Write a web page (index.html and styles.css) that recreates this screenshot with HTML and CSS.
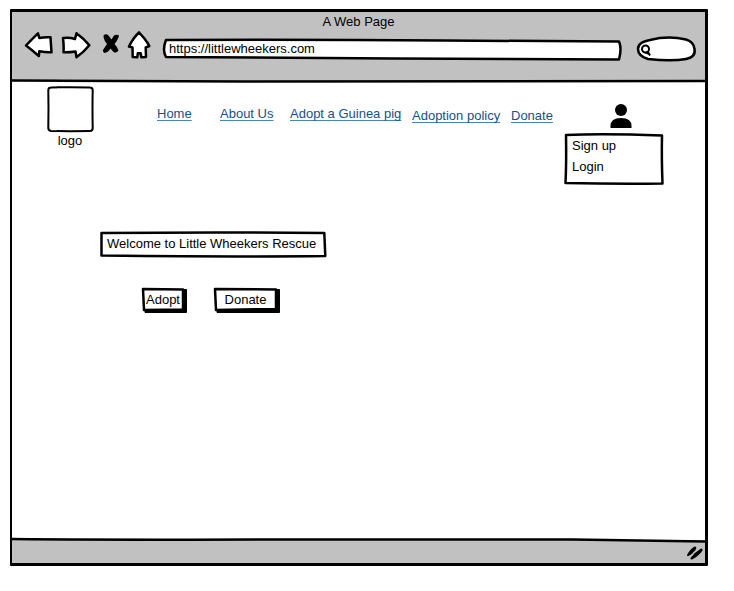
FILE: index.html
```html
<!DOCTYPE html>
<html lang="en">
<head>
<meta charset="utf-8">
<title>A Web Page</title>
<link rel="stylesheet" href="styles.css">
</head>
<body>
<div class="window">
  <header class="chrome">
    <div class="title">A Web Page</div>
    <div class="toolbar">
      <button class="tool" type="button" aria-label="Back"><svg width="30" height="28" viewBox="24 31 30 28"><path class="shape" d="M26 45.500Q32 39 38 33.300L39.300 38Q45 36.800 50.500 37.300L51.500 52.300Q46 52.600 39.300 51.300L38.800 56Q32 50 26 45.500Z"/></svg></button>
      <button class="tool" type="button" aria-label="Forward"><svg width="32" height="28" viewBox="60 31 32 28"><path class="shape" d="M63 38Q69 37 75 39L76.500 33.300Q83 38 89.300 45.300Q84 52 76.500 57.300L75.500 51.500Q69 52.500 63.500 52.300Q64 46 63 38Z"/></svg></button>
      <button class="tool" type="button" aria-label="Stop"><svg width="23" height="28" viewBox="98 31 23 28"><path d="M103.500 35.500Q106 33 108.500 35.500L111.500 39.500L114 35.500Q117 34 119 35.500Q118.500 39 114.500 44Q117.500 47 118.500 50.500Q116.500 53.500 113.500 52L110.500 48.500Q108 52.500 104.500 53Q102.500 52 103 50L107 44Q103.500 40 103.500 35.500Z"/></svg></button>
      <button class="tool" type="button" aria-label="Home"><svg width="24" height="28" viewBox="127 31 24 28"><path class="shape" d="M139 32.300Q145 38 149.300 46L145.700 47.500L146 57L141.300 57.300L140.700 53.300H137.800L137.300 57.300L132.700 57L132.500 47.500L129 46.500Q133 38 139 32.300Z"/></svg></button>
      <div class="field address">
        <svg class="sketch" viewBox="0 0 459 23" preserveAspectRatio="none" aria-hidden="true"><path d="M3 2Q150 1.500 280 2.500T456 3.500Q459 10 456 21.500Q330 21 230 20.500T3 19Q-1 12 3 2Z"/></svg>
        <input type="text" aria-label="Address" value="https://littlewheekers.com">
      </div>
      <div class="field search">
        <svg class="sketch" viewBox="0 0 61 26" preserveAspectRatio="none" aria-hidden="true"><path d="M14 4Q32 -.500 50 3.500Q58 6 58.500 13Q60 21 50 23Q36 25.500 12 23Q2 20 2 13Q2 6 14 4Z"/></svg>
        <svg class="glass" width="12" height="12" viewBox="0 0 12 12" aria-hidden="true"><circle cx="5.500" cy="6" r="3.500"/><path d="M5.500 9.500L9.500 11M8 9L10 12.500"/></svg>
        <input type="search" aria-label="Search">
      </div>
    </div>
    <svg class="rule" viewBox="0 0 692 4" preserveAspectRatio="none" aria-hidden="true"><path d="M0 1.500Q100 2 230 2.500T692 2"/></svg>
  </header>

  <main class="page">
    <div class="masthead">
      <div class="brand">
        <svg width="46" height="46" viewBox="0 0 46 46" aria-hidden="true"><path class="logo-box" d="M4 1.500Q23 1 43 1.500Q45.500 1.500 45.700 4Q45.300 23 45.700 42Q45.700 45 43 45Q23 45.300 4 45Q1.300 44.500 1.300 42Q1.700 23 1.300 4Q1.500 1.500 4 1.500Z"/></svg>
        <span>logo</span>
      </div>
      <nav class="links">
        <a href="#home">Home</a>
        <a href="#about">About Us</a>
        <a href="#adopt">Adopt a Guinea pig</a>
        <a class="low" href="#policy">Adoption policy</a>
        <a class="low" href="#donate">Donate</a>
      </nav>
      <div class="account">
        <svg class="person" width="22" height="24" viewBox="0 0 22 24" role="img" aria-label="Account"><circle cx="11" cy="6" r="6"/><path d="M.500 24V22Q.500 14 11 14T21.500 22V24Z"/></svg>
        <div class="menu">
          <svg class="sketch" viewBox="0 0 100 52" preserveAspectRatio="none" aria-hidden="true"><path d="M2 2Q40 .500 98 2.500Q97.500 25 98.500 50.500Q50 51 1.500 50Q2.500 30 2 2Z"/></svg>
          <a href="#signup">Sign up</a>
          <a href="#login">Login</a>
        </div>
      </div>
    </div>

    <section class="hero">
      <h1>
        <svg class="sketch" viewBox="0 0 227 27" preserveAspectRatio="none" aria-hidden="true"><path d="M1.500 2Q120 1 225 2L226 25Q150 26 1.500 24.500Z"/></svg>
        Welcome to Little Wheekers Rescue
      </h1>
      <div class="actions">
        <button class="action" type="button">
          <svg class="sketch" viewBox="0 0 45 25" preserveAspectRatio="none" aria-hidden="true"><path class="shade" d="M3 22L41 22V1.500H44.500V24.500H3Z"/><path d="M1 1L41 1.500V21.500L2 22Z"/></svg>
          <span>Adopt</span>
        </button>
        <button class="action wide" type="button">
          <svg class="sketch" viewBox="0 0 66 25" preserveAspectRatio="none" aria-hidden="true"><path class="shade" d="M3 22L62 22V1.500H65.500V24.500H3Z"/><path d="M1 1L62 1.500V21L2 22Z"/></svg>
          <span>Donate</span>
        </button>
      </div>
    </section>
  </main>

  <footer class="status">
    <svg class="rule top" viewBox="0 0 692 4" preserveAspectRatio="none" aria-hidden="true"><path d="M0 1Q100 2 300 1.500T560 1.500L692 3.500"/></svg>
    <svg class="grip" width="16" height="14" viewBox="0 0 16 14" aria-hidden="true"><path d="M0 9Q3 3 7.500 .500Q10.500 .500 8.500 4Q5 8.500 1.500 10Q0 10.500 0 9ZM3.500 12Q8 6 14 2.500Q17 2.500 14.500 6Q9.500 11.500 5 13.500Q3 13.500 3.500 12Z"/></svg>
  </footer>
</div>
</body>
</html>
```
FILE: styles.css
```css
* { box-sizing: border-box; }

body {
  margin: 0;
  min-height: 100vh;
  padding: 9px 26px 25px 10px;
  display: flex;
  background: #fff;
  color: #000;
  font: 13px/18px "Liberation Sans", Arial, sans-serif;
}

svg { display: block; overflow: visible; }
button, input { font: inherit; color: inherit; border: 0; background: none; padding: 0; }

.window {
  flex: 1;
  display: flex;
  flex-direction: column;
  border: 3px solid #000;
  border-width: 3px 3px 3px 2px;
  border-radius: 1px;
}

.chrome { background: #c1c1c1; }
.title { padding-top: 1px; text-align: center; }

.toolbar {
  display: flex;
  align-items: flex-start;
  gap: 6px;
  height: 48px;
  padding: 0 8px 0 12px;
}

.tool { flex: none; }
.shape { fill: #fff; stroke: #000; stroke-width: 2.5; stroke-linejoin: round; }

.field { position: relative; display: flex; align-items: center; }
.field input { position: relative; width: 100%; min-width: 0; outline: 0; }
.address { flex: 1; height: 23px; margin: 7px 8px 0 6px; padding: 0 6px 2px; }
.address input { height: 19px; }
.search { flex: none; width: 61px; height: 26px; margin-top: 5px; padding: 0 8px 0 4px; }
.glass { position: relative; flex: none; fill: none; stroke: #000; stroke-width: 2; }

.sketch { position: absolute; inset: 0; width: 100%; height: 100%; }
.sketch path {
  fill: #fff;
  stroke: #000;
  stroke-width: 2.5;
  stroke-linejoin: round;
  vector-effect: non-scaling-stroke;
}
.sketch .shade { fill: #000; stroke-width: 1; }

.rule { width: 100%; height: 4px; background: linear-gradient(#c1c1c1 50%, #fff 50%); }
.rule.top { background: linear-gradient(#fff 50%, #c1c1c1 50%); }
.rule path { fill: none; stroke: #000; stroke-width: 2.5; vector-effect: non-scaling-stroke; }

.page { flex: 1; }

.masthead {
  display: flex;
  align-items: flex-start;
  padding: 3px 41px 0 35px;
}
.brand { width: 46px; text-align: center; }

.logo-box { fill: #fff; stroke: #000; stroke-width: 2; }

.links {
  flex: 1;
  display: grid;
  grid-template-columns: 63px 70px 122px 99px auto;
  padding: 19px 0 0 64px;
  white-space: nowrap;
}
.links a {
  color: #174f8c;
  text-decoration-color: #4a83b8;
  text-underline-offset: 2px;
  text-decoration-skip-ink: none;
}
.links .low { padding-top: 2px; }

.account { flex: none; width: 100px; padding-top: 18px; }
.person { margin-left: 46px; }
.menu {
  position: relative;
  display: grid;
  gap: 3px;
  margin-top: 5px;
  padding: 4px 8px 9px;
}
.menu a { position: relative; color: inherit; text-decoration: none; }

.hero { padding: 46px 20px 0 88px; }
h1 {
  position: relative;
  width: fit-content;
  margin: 0;
  padding: 4px 10px 5px 7px;
  font: inherit;
  isolation: isolate;
}
h1 .sketch { z-index: -1; }

.actions { display: flex; gap: 27px; margin: 30px 0 0 42px; }
.action { position: relative; width: 45px; height: 25px; padding: 0 3px 1px 0; }
.action.wide { width: 66px; }
.action span { position: relative; }

.status { height: 25px; background: #c1c1c1; }
.grip { margin: 4px 2px 0 auto; }
```
